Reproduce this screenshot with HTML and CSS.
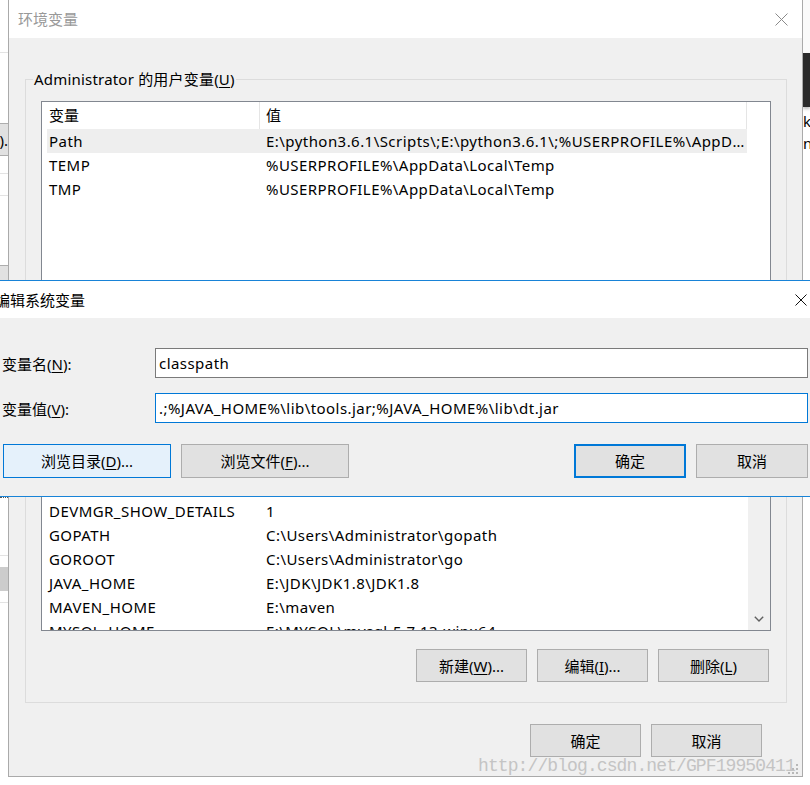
FILE: index.html
```html
<!DOCTYPE html>
<html lang="zh-CN">
<head>
<meta charset="utf-8">
<title>环境变量</title>
<link rel="stylesheet" href="styles.css">
</head>
<body>
<div class="desktop">
  <div class="behind behind-left">
    <div class="bl-top"></div>
    <div class="bl-space70"></div>
    <div class="bl-btn"><span>浏览(E).</span></div>
    <div class="bl-line1"></div>
    <div class="bl-line2"></div>
    <div class="bl-space69"></div>
    <div class="bl-btn2"></div>
    <div class="bl-hidden"></div>
    <div class="bl-dotted"></div>
    <div class="bl-space11"></div>
    <div class="bl-btn3"></div>
    <div class="bl-line3"></div>
  </div>

  <section class="window">
    <header class="titlebar">
      <span class="title">环境变量</span>
      <svg class="close" width="13" height="13" viewBox="0 0 13 13"><path d="M0.5 0.5 L12.5 12.5 M12.5 0.5 L0.5 12.5" stroke="#8a8a8a" stroke-width="1" fill="none"/></svg>
    </header>
    <div class="window-body">
      <fieldset class="group user-group">
        <legend>Administrator 的用户变量(<u>U</u>)</legend>
        <div class="listview user-list">
          <div class="lv-main">
            <div class="lv-header"><div class="lv-hcell">变量</div><div class="lv-hcell">值</div></div>
            <div class="lv-row selected"><div class="lv-cell">Path</div><div class="lv-cell">E:\python3.6.1\Scripts\;E:\python3.6.1\;%USERPROFILE%\AppData\Local\Microsoft\WindowsApps;</div></div>
            <div class="lv-row"><div class="lv-cell">TEMP</div><div class="lv-cell">%USERPROFILE%\AppData\Local\Temp</div></div>
            <div class="lv-row"><div class="lv-cell">TMP</div><div class="lv-cell">%USERPROFILE%\AppData\Local\Temp</div></div>
          </div>
        </div>
        <div class="btn-row">
          <button class="btn">新建(<u>N</u>)...</button>
          <button class="btn">编辑(<u>E</u>)...</button>
          <button class="btn">删除(<u>D</u>)</button>
        </div>
      </fieldset>

      <fieldset class="group sys-group">
        <legend>系统变量(<u>S</u>)</legend>
        <div class="listview sys-list">
          <div class="lv-main">
            <div class="lv-header"><div class="lv-hcell">变量</div><div class="lv-hcell">值</div></div>
            <div class="lv-row"><div class="lv-cell">asl.log</div><div class="lv-cell">Destination=file</div></div>
            <div class="lv-row"><div class="lv-cell">classpath</div><div class="lv-cell">.;%JAVA_HOME%\lib\tools.jar;%JAVA_HOME%\lib\dt.jar</div></div>
            <div class="lv-row"><div class="lv-cell">COMSEC</div><div class="lv-cell">C:\WINDOWS\CMD.EXE</div></div>
            <div class="lv-row"><div class="lv-cell">DEVMGR_SHOW_DETAILS</div><div class="lv-cell">1</div></div>
            <div class="lv-row"><div class="lv-cell">GOPATH</div><div class="lv-cell">C:\Users\Administrator\gopath</div></div>
            <div class="lv-row"><div class="lv-cell">GOROOT</div><div class="lv-cell">C:\Users\Administrator\go</div></div>
            <div class="lv-row"><div class="lv-cell">JAVA_HOME</div><div class="lv-cell">E:\JDK\JDK1.8\JDK1.8</div></div>
            <div class="lv-row"><div class="lv-cell">MAVEN_HOME</div><div class="lv-cell">E:\maven</div></div>
            <div class="lv-row"><div class="lv-cell">MYSQL_HOME</div><div class="lv-cell">E:\MYSQL\mysql-5.7.13-winx64</div></div>
          </div>
          <div class="vscroll">
            <svg class="chev" width="10" height="6" viewBox="0 0 10 6"><path d="M0.8 0.8 L5 5 L9.2 0.8" stroke="#606060" stroke-width="1.4" fill="none"/></svg>
          </div>
        </div>
        <div class="btn-row sys-btns">
          <button class="btn">新建(<u>W</u>)...</button>
          <button class="btn">编辑(<u>I</u>)...</button>
          <button class="btn">删除(<u>L</u>)</button>
        </div>
      </fieldset>

      <div class="dialog-buttons">
        <button class="btn">确定</button>
        <button class="btn">取消</button>
      </div>
    </div>
    <svg class="grip" width="12" height="12" viewBox="0 0 12 12">
      <rect x="9" y="1" width="2" height="2" fill="#b8b8b8"/>
      <rect x="9" y="5" width="2" height="2" fill="#b8b8b8"/>
      <rect x="5" y="5" width="2" height="2" fill="#b8b8b8"/>
      <rect x="9" y="9" width="2" height="2" fill="#b8b8b8"/>
      <rect x="5" y="9" width="2" height="2" fill="#b8b8b8"/>
      <rect x="1" y="9" width="2" height="2" fill="#b8b8b8"/>
    </svg>
  </section>

  <div class="behind behind-right">
    <div class="br-top"></div>
    <div class="br-dark"></div>
    <div class="br-text">k<br>n</div>
  </div>
</div>

<section class="edit-dialog">
  <header class="edit-titlebar">
    <span class="edit-title">编辑系统变量</span>
    <svg class="edit-close" width="12" height="12" viewBox="0 0 12 12"><path d="M0.5 0.5 L11.5 11.5 M11.5 0.5 L0.5 11.5" stroke="#111" stroke-width="1" fill="none"/></svg>
  </header>
  <div class="edit-body">
    <div class="field">
      <label class="field-label">变量名(<u>N</u>):</label>
      <input class="field-input" type="text" value="classpath">
    </div>
    <div class="field">
      <label class="field-label">变量值(<u>V</u>):</label>
      <input class="field-input focused" type="text" value=".;%JAVA_HOME%\lib\tools.jar;%JAVA_HOME%\lib\dt.jar">
    </div>
    <div class="edit-buttons">
      <div class="edit-btn-group">
        <button class="btn wide hover">浏览目录(<u>D</u>)...</button>
        <button class="btn wide">浏览文件(<u>F</u>)...</button>
      </div>
      <div class="edit-btn-group">
        <button class="btn mid default">确定</button>
        <button class="btn mid">取消</button>
      </div>
    </div>
  </div>
</section>

<div class="watermark">http://blog.csdn.net/GPF19950411</div>
</body>
</html>
```

FILE: styles.css
```css
* { box-sizing: border-box; }

body {
  margin: 0;
  width: 810px;
  height: 785px;
  overflow: hidden;
  position: relative;
  background: #ffffff;
  font-family: "Noto Sans", "Noto Sans CJK SC", sans-serif;
  font-size: 15px;
  color: #000;
}

u { text-decoration: underline; text-underline-offset: 2px; }

.desktop {
  display: flex;
  height: 785px;
}

/* windows behind */
.behind {
  flex: none;
  overflow: hidden;
  display: flex;
  flex-direction: column;
  background: #fff;
}
.behind-left { width: 8px; }
.behind-right { width: 7px; }

.bl-top { height: 53px; border-bottom: 1px solid #e3e3e3; flex: none; }
.bl-space70 { height: 70px; flex: none; }
.bl-btn {
  height: 33px; flex: none;
  background: #e1e1e1;
  border-top: 1px solid #adadad;
  border-bottom: 1px solid #adadad;
  display: flex; justify-content: flex-end; align-items: center;
  white-space: nowrap; line-height: 20px;
}
.bl-btn span { flex: none; }
.bl-line1 { height: 18px; border-bottom: 1px solid #e3e3e3; flex: none; }
.bl-line2 { height: 22px; border-bottom: 1px solid #e3e3e3; flex: none; }
.bl-space69 { height: 69px; flex: none; }
.bl-btn2 { height: 40px; background: #e1e1e1; border-top: 1px solid #adadad; flex: none; }
.bl-hidden { height: 192px; flex: none; }
.bl-dotted { height: 59px; border-top: 1px dotted #555; border-bottom: 1px solid #e3e3e3; flex: none; }
.bl-space11 { height: 11px; flex: none; }
.bl-btn3 { height: 24px; background: #cccccc; flex: none; }
.bl-line3 { height: 12px; border-bottom: 1px solid #e3e3e3; flex: none; }

.br-top { height: 53px; background: #fafafa; flex: none; }
.br-dark { height: 54px; background: #2b2b2b; box-shadow: 0 2px 3px rgba(0,0,0,0.25); flex: none; }
.br-text { padding-top: 3px; line-height: 22px; font-size: 15px; }

/* main window */
.window {
  position: relative;
  flex: none;
  width: 795px;
  height: 777px;
  border: 1px solid #aaaaaa;
  border-top: none;
  background: #f0f0f0;
  display: flex;
  flex-direction: column;
}

.titlebar {
  height: 38px;
  flex: none;
  background: #fff;
  display: flex;
  align-items: center;
  justify-content: space-between;
  padding: 0 14px 0 9px;
}
.title { color: #999; font-size: 15px; line-height: 20px; }
.close { display: block; }

.window-body {
  padding: 0 15px 0 16px;
  display: flex;
  flex-direction: column;
}

.group {
  margin: 0;
  min-width: 0;
  border: 1px solid #dcdcdc;
  padding: 0 15px 20px 7px;
}
.group legend {
  padding: 0 1px;
  line-height: 20px;
  font-size: 15px;
  letter-spacing: 0.2px;
}
.user-group { margin-top: 31px; }
.sys-group { margin-top: 8px; }

.listview {
  margin: 12px 0 0 8px;
  border: 1px solid #828790;
  background: #fff;
  display: flex;
  overflow: hidden;
}
.user-list { height: 186px; }
.sys-list { height: 231px; }

.lv-main {
  flex: 1;
  padding-left: 5px;
  overflow: hidden;
}
.lv-header, .lv-row {
  display: grid;
  grid-template-columns: 213px 487px;
  width: 700px;
}
.lv-header { height: 27px; }
.sys-list .lv-header { height: 26px; }
.lv-hcell {
  line-height: 27px;
  border-right: 1px solid #e5e5e5;
  white-space: nowrap;
  overflow: hidden;
}
.lv-row { height: 24px; }
.lv-row.selected { background: #eeeeee; }
.lv-cell {
  line-height: 24px;
  white-space: nowrap;
  overflow: hidden;
  text-overflow: ellipsis;
  letter-spacing: 0.45px;
}
.lv-hcell:first-child, .lv-cell:first-child { padding-left: 2px; }
.lv-hcell:last-child, .lv-cell:last-child { padding-left: 6px; }

.vscroll {
  flex: none;
  width: 22px;
  background: #f0f0f0;
  display: flex;
  flex-direction: column;
  justify-content: flex-end;
  align-items: center;
  padding-bottom: 8px;
}
.chev { display: block; }

.btn-row {
  display: flex;
  justify-content: flex-end;
  gap: 10px;
  margin-top: 19px;
  margin-right: 2px;
}
.sys-btns { margin-top: 18px; }

.btn {
  appearance: none;
  margin: 0;
  padding: 0;
  width: 111px;
  height: 33px;
  background: #e1e1e1;
  border: 1px solid #adadad;
  font-family: inherit;
  font-size: 15px;
  color: #000;
  line-height: 20px;
}

.dialog-buttons {
  display: flex;
  justify-content: flex-end;
  gap: 10px;
  margin-top: 21px;
  margin-right: 25px;
}

.grip {
  position: absolute;
  right: 3px;
  bottom: 1px;
}

/* edit dialog overlay */
.edit-dialog {
  position: absolute;
  left: -10px;
  top: 280px;
  width: 840px;
  border: 1px solid #1883d7;
  background: #f0f0f0;
}
.edit-titlebar {
  height: 37px;
  background: #fff;
  display: flex;
  align-items: center;
  justify-content: space-between;
  padding: 0 22px 0 4px;
}
.edit-title { font-size: 15px; line-height: 20px; }
.edit-close { display: block; }

.edit-body {
  padding: 30px 21px 18px 11px;
  display: flex;
  flex-direction: column;
}
.field {
  display: grid;
  grid-template-columns: 153px 653px;
  align-items: center;
}
.field + .field { margin-top: 15px; }
.field-label { line-height: 20px; padding-top: 1px; }
.field-input {
  height: 30px;
  border: 1px solid #7a7a7a;
  background: #fff;
  padding: 0 3px;
  font-family: inherit;
  font-size: 15px;
  letter-spacing: 0.45px;
  color: #000;
  outline: none;
}
.field-input.focused { border-color: #0078d7; }

.edit-buttons {
  display: flex;
  justify-content: space-between;
  margin-top: 21px;
  padding-left: 1px;
}
.edit-btn-group { display: flex; gap: 10px; }
.btn.wide { width: 168px; height: 34px; }
.btn.mid { width: 112px; height: 34px; }
.btn.hover { background: #e5f1fb; border-color: #0078d7; }
.btn.default { border: 2px solid #0078d7; }

.watermark {
  position: absolute;
  left: 478px;
  top: 756px;
  font-family: "Liberation Mono", monospace;
  font-size: 18px;
  letter-spacing: -0.9px;
  line-height: 20px;
  color: #c4c4c4;
  white-space: nowrap;
}
```
